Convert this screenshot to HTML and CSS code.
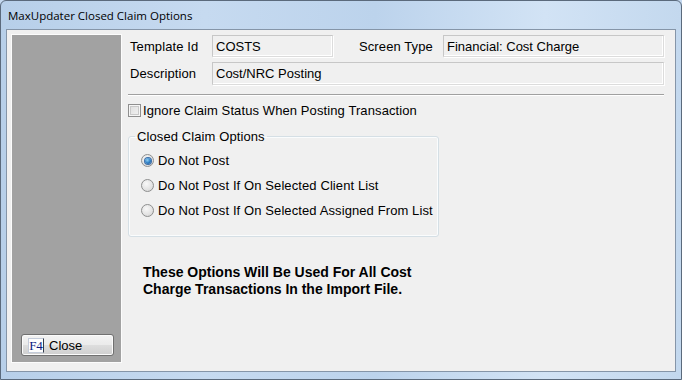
FILE: index.html
```html
<!DOCTYPE html>
<html>
<head>
<meta charset="utf-8">
<title>MaxUpdater Closed Claim Options</title>
<link rel="stylesheet" href="styles.css">
</head>
<body>
<div class="window">
  <div class="titlebar">MaxUpdater Closed Claim Options</div>
  <div class="client">
    <div class="sidepanel">
      <button class="btn"><span class="key">F4</span><span class="btn-label">Close</span></button>
    </div>
    <div class="content">
      <div class="row row1">
        <span class="label lbl-template">Template Id</span>
        <div class="field f-template">COSTS</div>
        <span class="label lbl-screen">Screen Type</span>
        <div class="field f-screen">Financial: Cost Charge</div>
      </div>
      <div class="row row2">
        <span class="label lbl-template">Description</span>
        <div class="field f-desc">Cost/NRC Posting</div>
      </div>
      <div class="separator"></div>
      <div class="check-row">
        <span class="checkbox"></span>
        <span class="check-label">Ignore Claim Status When Posting Transaction</span>
      </div>
      <fieldset class="group">
        <legend class="legend">Closed Claim Options</legend>
        <div class="radio-row"><span class="radio checked"></span><span class="radio-label">Do Not Post</span></div>
        <div class="radio-row"><span class="radio"></span><span class="radio-label">Do Not Post If On Selected Client List</span></div>
        <div class="radio-row"><span class="radio"></span><span class="radio-label">Do Not Post If On Selected Assigned From List</span></div>
      </fieldset>
      <p class="note">These Options Will Be Used For All Cost<br>Charge Transactions In the Import File.</p>
    </div>
  </div>
</div>
</body>
</html>
```

FILE: styles.css
```css
html, body {
  margin: 0;
  padding: 0;
  width: 682px;
  height: 380px;
  overflow: hidden;
  background: #c4d8ef;
}

.window {
  box-sizing: border-box;
  width: 682px;
  height: 380px;
  border: 1px solid #5b6a7c;
  border-radius: 6px 6px 0 0;
  background: linear-gradient(to right, #b7cfe9 0%, #c6daf0 30%, #bcd3ec 55%, #d2e3f5 80%, #c3d8ee 100%);
  padding: 0 5px 7px 5px;
  display: flex;
  flex-direction: column;
  font-family: "Liberation Sans", Arial, sans-serif;
  font-size: 13px;
  color: #000;
}

.titlebar {
  height: 28px;
  flex: none;
  box-sizing: border-box;
  padding: 7px 0 0 2px;
  font-family: "Open Sans", "Noto Sans", sans-serif;
  font-size: 11.5px;
  line-height: 15px;
  color: #000;
}

.client {
  box-sizing: border-box;
  width: 670px;
  height: 343px;
  border: 1px solid #8595a8;
  background: #f0f0f0;
  padding: 4px 0 0 4px;
  display: flex;
  align-items: flex-start;
}

.sidepanel {
  box-sizing: border-box;
  flex: none;
  width: 111px;
  height: 329px;
  border: 1px solid #fcfcfc;
  background: #a2a2a2;
  display: flex;
  flex-direction: column;
  justify-content: flex-end;
  padding: 0 7px 6px 9px;
}

.btn {
  box-sizing: border-box;
  width: 93px;
  height: 22px;
  margin: 0;
  padding: 0 0 0 6px;
  border: 1px solid #707070;
  border-radius: 3px;
  background: linear-gradient(to bottom, #f3f3f3 0%, #ebebeb 48%, #dddddd 52%, #cfcfcf 100%);
  box-shadow: inset 0 0 0 1px #fbfbfb;
  display: flex;
  align-items: center;
  font-family: "Liberation Sans", Arial, sans-serif;
  font-size: 13px;
  color: #000;
}

.key {
  box-sizing: border-box;
  width: 16px;
  height: 15px;
  border: 1px solid #c4ccda;
  border-right-color: #333a4a;
  background: #fdfdfd;
  font-family: "Liberation Serif", "Times New Roman", serif;
  font-size: 13px;
  line-height: 13px;
  color: #0a1a80;
  text-align: center;
}

.btn-label {
  margin-left: 5px;
  line-height: 15px;
}

.content {
  box-sizing: border-box;
  width: 536px;
  margin: 1px 0 0 6px;
  display: flex;
  flex-direction: column;
}

.row {
  display: flex;
  align-items: center;
}

.row1 { height: 22px; }
.row2 { height: 23px; margin-top: 5px; }

.label {
  line-height: 15px;
  letter-spacing: 0.1px;
}

.lbl-template {
  width: 82px;
  padding-left: 2px;
}

.lbl-screen {
  width: 84px;
  padding-left: 26px;
}

.field {
  box-sizing: border-box;
  height: 100%;
  border: 1px solid;
  border-color: #c7c7c7 #dcdcdc #dcdcdc #c7c7c7;
  box-shadow: inset -1px -1px 0 #ffffff, 1px 1px 0 #ffffff;
  background: #f0f0f0;
  padding-left: 3px;
  display: flex;
  align-items: center;
  line-height: 15px;
}

.f-template { width: 121px; }
.f-screen { width: 221px; }
.f-desc { width: 452px; }

.separator {
  margin-top: 9px;
  height: 1px;
  background: #a0a0a0;
  border-bottom: 1px solid #ffffff;
}

.check-row {
  display: flex;
  align-items: center;
  margin-top: 8px;
  height: 13px;
}

.checkbox {
  box-sizing: border-box;
  width: 13px;
  height: 13px;
  border: 1px solid #8f8f8f;
  background: linear-gradient(135deg, #dcdcdc 0%, #f4f4f4 100%);
  box-shadow: inset 0 0 0 1px #f6f6f6, inset 0 0 0 2px #c9c9c9;
}

.check-label {
  margin-left: 2px;
  line-height: 15px;
  letter-spacing: 0.1px;
}

.group {
  box-sizing: border-box;
  width: 311px;
  margin: 12px 0 0 0;
  padding: 4px 0 13px 0;
  border: 1px solid #d5dfe5;
  border-radius: 3px;
  box-shadow: inset 0 0 0 1px #fafcfd;
  min-inline-size: 0;
}

.legend {
  margin-left: 6px;
  padding: 0 2px;
  line-height: 15px;
  letter-spacing: 0.1px;
}

.radio-row {
  display: flex;
  align-items: center;
  height: 25px;
  padding-left: 12px;
}

.radio {
  box-sizing: border-box;
  width: 13px;
  height: 13px;
  border-radius: 50%;
  border: 1px solid #8e8f8f;
  background: radial-gradient(circle at 40% 35%, #f8f8f8 0%, #e2e2e2 60%, #cfcfcf 100%);
  display: flex;
  align-items: center;
  justify-content: center;
}

.radio.checked::after {
  content: "";
  width: 6px;
  height: 6px;
  border-radius: 50%;
  background: radial-gradient(circle at 40% 35%, #8fd0f4 0%, #2a7bc2 55%, #1b4f8a 100%);
  box-shadow: 0 0 0 1px #3c6ea8;
}

.radio-label {
  margin-left: 4px;
  line-height: 15px;
  letter-spacing: 0.1px;
}

.note {
  margin: 27px 0 0 15px;
  font-weight: bold;
  font-size: 14px;
  line-height: 17px;
}
```
